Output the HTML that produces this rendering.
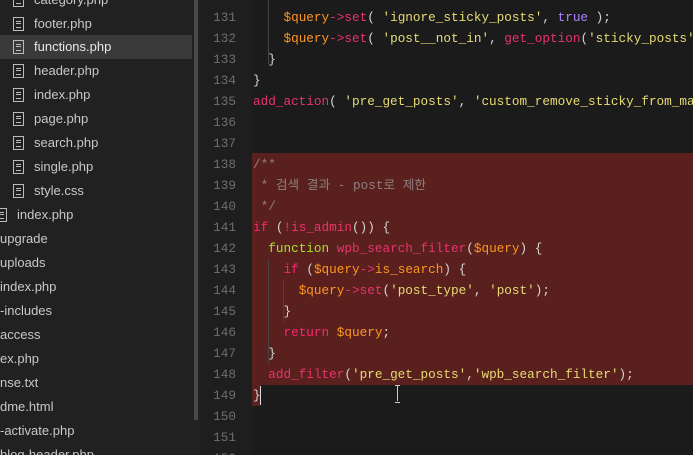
<!DOCTYPE html>
<html style="margin:0;width:693px;height:455px;overflow:hidden"><head><meta charset="utf-8"><style>
body{margin:0;width:693px;height:455px;overflow:hidden;background:#1b1b1b;position:relative;font-family:"Liberation Sans",sans-serif}
#side{position:absolute;left:0;top:0;width:200px;height:455px;background:#212121;overflow:hidden}
#sb{position:absolute;left:194px;top:0;width:4px;height:420px;background:#4a4a4a}
.it{position:absolute;height:24px;line-height:24px;font-size:13px;color:#c8c8c8;white-space:nowrap}
.ic{position:absolute;width:9px;height:12px;border:1px solid #bbb;top:5px}
.ic:after{content:"";position:absolute;left:2px;top:3px;width:5px;height:5px;border-top:1px solid #bbb;border-bottom:1px solid #bbb}
.ic:before{content:"";position:absolute;left:2px;top:5px;width:5px;border-top:1px solid #bbb}
#sel{position:absolute;left:0;top:0;width:192px;height:24px;background:#3a3a3a}
#gut{position:absolute;left:200px;top:0;width:52px;height:455px;background:#1e1e1e}
.n{position:absolute;left:206px;width:30px;text-align:right;font:12.7px "Liberation Mono",monospace;color:#6e6e6e;height:21px;line-height:21px}
.l{position:absolute;left:253px;font:12.7px "Liberation Mono","Noto Sans CJK KR",monospace;color:#d4d4d4;height:21px;line-height:21px;white-space:pre}
#hl{position:absolute;left:252px;top:153px;width:441px;height:232px;background:#5a201e}
.g{position:absolute;width:1px;background:#444}
.s{color:#e6db74}.v{color:#fd971f}.f{color:#e8336d}.k{color:#f92672}.p{color:#ae81ff}.gr{color:#a6e22e}.c{color:#8f7f7f}
</style></head><body>
<div id="side">
<div id="sel" style="top:35px"></div>
<div class="it" style="left:34px;top:-12px">category.php</div><div class="ic" style="left:13px;top:-7px"></div>
<div class="it" style="left:34px;top:12px">footer.php</div><div class="ic" style="left:13px;top:17px"></div>
<div class="it" style="left:34px;top:35px;color:#e8e8e8">functions.php</div><div class="ic" style="left:13px;top:40px"></div>
<div class="it" style="left:34px;top:59px">header.php</div><div class="ic" style="left:13px;top:64px"></div>
<div class="it" style="left:34px;top:83px">index.php</div><div class="ic" style="left:13px;top:88px"></div>
<div class="it" style="left:34px;top:107px">page.php</div><div class="ic" style="left:13px;top:112px"></div>
<div class="it" style="left:34px;top:131px">search.php</div><div class="ic" style="left:13px;top:136px"></div>
<div class="it" style="left:34px;top:155px">single.php</div><div class="ic" style="left:13px;top:160px"></div>
<div class="it" style="left:34px;top:179px">style.css</div><div class="ic" style="left:13px;top:184px"></div>
<div class="it" style="left:17px;top:203px">index.php</div><div class="ic" style="left:-4px;top:208px"></div>
<div class="it" style="left:0;top:227px">upgrade</div>
<div class="it" style="left:0;top:251px">uploads</div>
<div class="it" style="left:0;top:275px">index.php</div>
<div class="it" style="left:0;top:299px">-includes</div>
<div class="it" style="left:0;top:323px">access</div>
<div class="it" style="left:0;top:347px">ex.php</div>
<div class="it" style="left:0;top:371px">nse.txt</div>
<div class="it" style="left:0;top:395px">dme.html</div>
<div class="it" style="left:0;top:419px">-activate.php</div>
<div class="it" style="left:0;top:443px">blog-header.php</div>
<div id="sb"></div>
</div>
<div id="gut"></div>
<div id="hl"></div>
<div style="position:absolute;left:252px;top:385px;width:8px;height:21px;background:#5a201e"></div>
<div style="position:absolute;left:260px;top:386px;width:1px;height:19px;background:#ddd"></div>
<div class="g" style="left:268px;top:0;height:64px"></div>
<div class="g" style="left:268px;top:259px;height:105px"></div>
<div class="g" style="left:283px;top:280px;height:42px"></div>
<div class="n" style="top:-14px">130</div>
<div class="n" style="top:7px">131</div><div class="n" style="top:28px">132</div><div class="n" style="top:49px">133</div><div class="n" style="top:70px">134</div><div class="n" style="top:91px">135</div><div class="n" style="top:112px">136</div><div class="n" style="top:133px">137</div><div class="n" style="top:154px">138</div><div class="n" style="top:175px">139</div><div class="n" style="top:196px">140</div><div class="n" style="top:217px">141</div><div class="n" style="top:238px">142</div><div class="n" style="top:259px">143</div><div class="n" style="top:280px">144</div><div class="n" style="top:301px">145</div><div class="n" style="top:322px">146</div><div class="n" style="top:343px">147</div><div class="n" style="top:364px">148</div><div class="n" style="top:385px">149</div><div class="n" style="top:406px">150</div><div class="n" style="top:427px">151</div><div class="n" style="top:448px;height:7px;overflow:hidden">152</div>
<div class="l" style="top:7px">    <span class="v">$query</span><span class="f">-&gt;set</span>( <span class="s">'ignore_sticky_posts'</span>, <span class="p">true</span> );</div>
<div class="l" style="top:28px">    <span class="v">$query</span><span class="f">-&gt;set</span>( <span class="s">'post__not_in'</span>, <span class="f">get_option</span>(<span class="s">'sticky_posts'</span></div>
<div class="l" style="top:49px">  }</div>
<div class="l" style="top:70px">}</div>
<div class="l" style="top:91px"><span class="f">add_action</span>( <span class="s">'pre_get_posts'</span>, <span class="s">'custom_remove_sticky_from_main'</span></div>
<div class="l c" style="top:154px">/**</div>
<div class="l c" style="top:175px"> * 검색 결과 - post로 제한</div>
<div class="l c" style="top:196px"> */</div>
<div class="l" style="top:217px"><span class="k">if</span> (<span class="k">!</span><span class="f">is_admin</span>()) {</div>
<div class="l" style="top:238px">  <span class="gr">function</span> <span class="f">wpb_search_filter</span>(<span class="v">$query</span>) {</div>
<div class="l" style="top:259px">    <span class="k">if</span> (<span class="v">$query</span><span class="f">-&gt;</span><span class="v">is_search</span>) {</div>
<div class="l" style="top:280px">      <span class="v">$query</span><span class="f">-&gt;set</span>(<span class="s">'post_type'</span>, <span class="s">'post'</span>);</div>
<div class="l" style="top:301px">    }</div>
<div class="l" style="top:322px">    <span class="k">return</span> <span class="v">$query</span>;</div>
<div class="l" style="top:343px">  }</div>
<div class="l" style="top:364px">  <span class="f">add_filter</span>(<span class="s">'pre_get_posts'</span>,<span class="s">'wpb_search_filter'</span>);</div>
<div class="l" style="top:385px">}</div>
<div style="position:absolute;left:395px;top:385px;width:5px;height:16px;border-top:1px solid #ccc;border-bottom:1px solid #ccc"></div>
<div style="position:absolute;left:397px;top:385px;width:1px;height:16px;background:#ccc"></div>
</body></html>
